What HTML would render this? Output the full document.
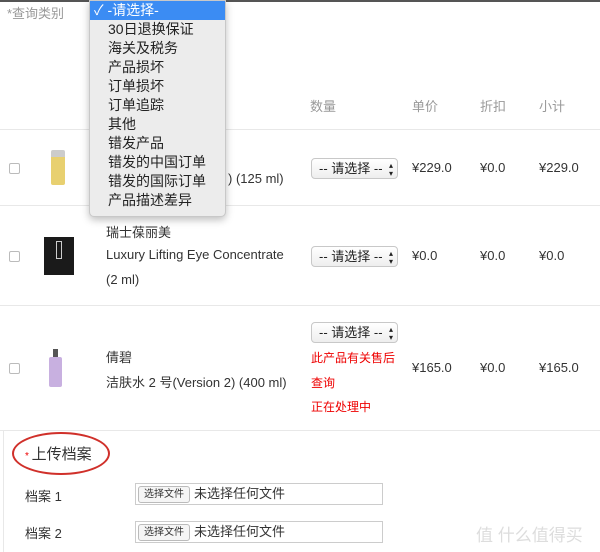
<!DOCTYPE html><html><head><meta charset="utf-8"><style>
*{margin:0;padding:0;box-sizing:border-box}
body{width:600px;height:552px;background:#fff;position:relative;overflow:hidden;font-family:"Liberation Sans","Noto Sans CJK SC",sans-serif;color:#333;font-size:13px}
.a{position:absolute;white-space:nowrap}
.hl{position:absolute;left:0;width:600px;height:1px;background:#e8e8e8}
.g{color:#999}
.sel{position:absolute;width:87px;height:21px;border:1px solid #c8c8c8;border-radius:4px;background:linear-gradient(#fff,#eee);font-size:13px;line-height:19px;padding-left:7px;color:#222}
.sel:after{content:"▴";position:absolute;right:4px;top:-3px;font-size:8px}
.sel:before{content:"▾";position:absolute;right:4px;top:5px;font-size:8px}
.cb{position:absolute;width:11px;height:11px;border:1px solid #bbb;border-radius:2px;left:9px}
.r{color:#e00;font-size:12px}
.menu{position:absolute;left:89px;top:0;width:137px;height:217px;background:#ececec;border:1px solid #c8c8c8;border-radius:0 0 5px 5px;box-shadow:0 3px 8px rgba(0,0,0,.25);font-size:14px;color:#222}
.menu div{height:19px;line-height:19px;padding-left:18px}
.menu .on{background:#3b8cf3;color:#fff;padding-left:4px}
.fi{position:absolute;left:135px;width:248px;height:22px;border:1px solid #ccc;font-size:13px;line-height:20px}
.fi span{display:inline-block;border:1px solid #bbb;border-radius:3px;font-size:10px;padding:0 5px;line-height:15px;margin:2px 4px 0 2px;background:#f5f5f5;vertical-align:top}
</style></head><body>
<div class="a" style="left:0;top:0;width:600px;height:2px;background:#555"></div>
<div class="a g" style="left:7px;top:3px;font-size:13px">*查询类别</div>
<div class="a g" style="left:310px;top:96px">数量</div>
<div class="a g" style="left:412px;top:96px">单价</div>
<div class="a g" style="left:480px;top:96px">折扣</div>
<div class="a g" style="left:539px;top:96px">小计</div>
<div class="hl" style="top:129px"></div>
<div class="hl" style="top:205px"></div>
<div class="hl" style="top:305px"></div>
<div class="hl" style="top:430px"></div>
<div class="a" style="left:3px;top:430px;width:1px;height:122px;background:#e8e8e8"></div>
<div class="cb" style="top:163px"></div>
<div class="a" style="left:51px;top:150px;width:14px;height:35px;background:linear-gradient(#ccc 0,#ccc 20%,#e8d070 20%,#e8d070 100%);border-radius:2px"></div>
<div class="a" style="left:228px;top:171px">) (125 ml)</div>
<div class="sel" style="left:311px;top:158px">-- 请选择 --</div>
<div class="a" style="left:412px;top:160px">¥229.0</div>
<div class="a" style="left:480px;top:160px">¥0.0</div>
<div class="a" style="left:539px;top:160px">¥229.0</div>
<div class="cb" style="top:251px"></div>
<div class="a" style="left:44px;top:237px;width:30px;height:38px;background:#1a1a1a"></div>
<div class="a" style="left:56px;top:241px;width:6px;height:18px;border:1px solid #ccc"></div>
<div class="a" style="left:106px;top:222px">瑞士葆丽美</div>
<div class="a" style="left:106px;top:247px">Luxury Lifting Eye Concentrate</div>
<div class="a" style="left:106px;top:272px">(2 ml)</div>
<div class="sel" style="left:311px;top:246px">-- 请选择 --</div>
<div class="a" style="left:412px;top:248px">¥0.0</div>
<div class="a" style="left:480px;top:248px">¥0.0</div>
<div class="a" style="left:539px;top:248px">¥0.0</div>
<div class="cb" style="top:363px"></div>
<div class="a" style="left:53px;top:349px;width:5px;height:8px;background:#555"></div>
<div class="a" style="left:49px;top:357px;width:13px;height:30px;background:#c8b0e0;border-radius:2px"></div>
<div class="a" style="left:106px;top:347px">倩碧</div>
<div class="a" style="left:106px;top:372px">洁肤水 2 号(Version 2) (400 ml)</div>
<div class="sel" style="left:311px;top:322px">-- 请选择 --</div>
<div class="a r" style="left:311px;top:349px">此产品有关售后</div>
<div class="a r" style="left:311px;top:374px">查询</div>
<div class="a r" style="left:311px;top:398px">正在处理中</div>
<div class="a" style="left:412px;top:360px">¥165.0</div>
<div class="a" style="left:480px;top:360px">¥0.0</div>
<div class="a" style="left:539px;top:360px">¥165.0</div>
<div class="a" style="left:12px;top:432px;width:98px;height:43px;border:2px solid #d0302a;border-radius:50%"></div>
<div class="a" style="left:25px;top:443px;font-size:15px"><span style="color:#e00;font-size:10px">* </span>上传档案</div>
<div class="a" style="left:25px;top:486px">档案 1</div>
<div class="a" style="left:25px;top:523px">档案 2</div>
<div class="fi" style="top:483px"><span>选择文件</span>未选择任何文件</div>
<div class="fi" style="top:521px"><span>选择文件</span>未选择任何文件</div>
<div class="a" style="left:476px;top:521px;color:#ddd;font-size:17px">值 什么值得买</div>
<div class="menu">
<div class="on">✓ -请选择-</div>
<div>30日退换保证</div><div>海关及税务</div><div>产品损坏</div><div>订单损坏</div><div>订单追踪</div><div>其他</div><div>错发产品</div><div>错发的中国订单</div><div>错发的国际订单</div><div>产品描述差异</div>
</div>
</body></html>
